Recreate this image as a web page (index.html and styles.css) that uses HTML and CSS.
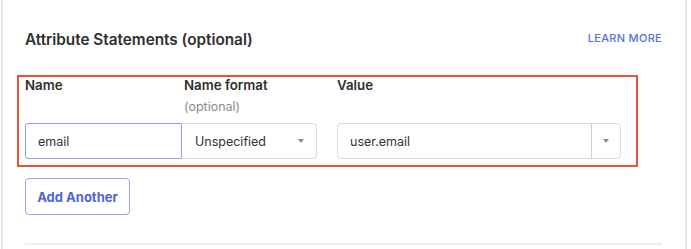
FILE: index.html
```html
<!DOCTYPE html>
<html>
<head>
<meta charset="utf-8">
<link rel="stylesheet" href="styles.css">
</head>
<body>
<div class="panel">
  <div class="head">
    <h2 class="title">Attribute Statements (optional)</h2>
    <a class="learn">LEARN MORE</a>
  </div>
  <div class="highlight">
    <div class="labels">
      <div class="col-name"><span class="lbl">Name</span></div>
      <div class="col-format"><span class="lbl">Name format</span><span class="opt">(optional)</span></div>
      <div class="col-value"><span class="lbl">Value</span></div>
    </div>
    <div class="fields">
      <div class="input name-input">email</div>
      <div class="select format-select"><span>Unspecified</span><span class="caret"></span></div>
      <div class="combo"><span class="combo-text">user.email</span><span class="combo-btn"><span class="caret"></span></span></div>
    </div>
  </div>
  <button class="add">Add Another</button>
  <div class="rule"></div>
</div>
</body>
</html>
```
FILE: styles.css
```css
html, body {
  margin: 0;
  padding: 0;
  background: #ffffff;
}
body {
  font-family: Inter, "Helvetica Neue", Arial, sans-serif;
  color: #333333;
  width: 691px;
  height: 249px;
  overflow: hidden;
}
.panel {
  margin-left: 1px;
  height: 249px;
  border-left: 2px solid #e9e9e9;
  border-right: 2px solid #e9e9e9;
  padding: 0 23px 0 22px;
  box-sizing: border-box;
  width: 686px;
}
.head {
  display: flex;
  justify-content: space-between;
  align-items: flex-start;
  padding-top: 30px;
}
.title {
  margin: 0;
  font-size: 15.3px;
  font-weight: 600;
  line-height: 20px;
  color: #2f2f2f;
}
.learn {
  font-size: 11px;
  font-weight: 500;
  color: #5670dc;
  line-height: 14px;
  margin-top: 1px;
  letter-spacing: 0.3px;
}
.highlight {
  margin-top: 25px;
  margin-left: -8px;
  width: 621px;
  box-sizing: border-box;
  border: 2px solid #e5553b;
  padding: 0 15px 6px 6px;
}
.labels {
  display: flex;
  height: 46px;
}
.labels > div {
  display: flex;
  flex-direction: column;
}
.col-name { width: 159px; }
.col-format { width: 153px; }
.lbl {
  font-size: 13.3px;
  font-weight: 600;
  line-height: 16px;
  color: #2f2f2f;
}
.opt {
  font-size: 12.5px;
  line-height: 16px;
  margin-top: 6px;
  color: #8a8a8a;
}
.fields {
  display: flex;
  height: 36px;
}
.input, .select, .combo {
  box-sizing: border-box;
  height: 36px;
  font-size: 12.5px;
  color: #333;
  display: flex;
  align-items: center;
}
.name-input {
  width: 157px;
  border: 1px solid #8ea1ea;
  border-radius: 3px 0 0 3px;
  padding-left: 12px;
  position: relative;
  z-index: 1;
}
.format-select {
  width: 135px;
  border: 1px solid #dcdcdc;
  border-left: none;
  border-radius: 0 4px 4px 0;
  padding: 0 12px 0 13px;
  justify-content: space-between;
}
.caret {
  width: 0;
  height: 0;
  border-left: 3px solid transparent;
  border-right: 3px solid transparent;
  border-top: 4px solid #8c8c8c;
}
.combo {
  width: 284px;
  margin-left: 20px;
  border: 1px solid #dcdcdc;
  border-radius: 4px;
}
.combo-text {
  flex: 1;
  padding-left: 12px;
}
.combo-btn {
  width: 28px;
  height: 100%;
  border-left: 1px solid #cfcfcf;
  display: flex;
  align-items: center;
  justify-content: center;
}
.add {
  display: block;
  margin-top: 11px;
  width: 105px;
  height: 37px;
  background: #fff;
  border: 1px solid #95a7ea;
  border-radius: 4px;
  font-family: inherit;
  font-size: 13px;
  font-weight: 700;
  color: #4c64d6;
  padding: 0;
}
.rule {
  margin-top: 28px;
  height: 2px;
  background: #eeeeee;
}
```
